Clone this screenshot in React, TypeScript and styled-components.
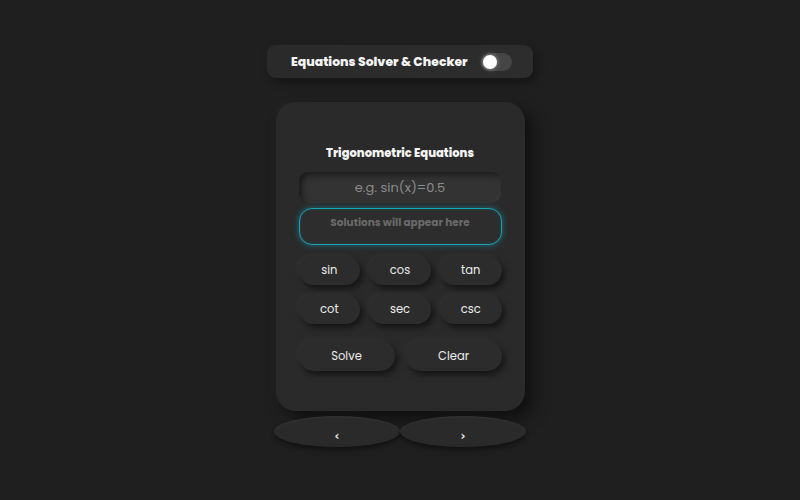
import React from "react";
import styled, { createGlobalStyle } from "styled-components";

const Global = createGlobalStyle`
  html, body { margin: 0; padding: 0; background: #1f1f1f; }
  body { font-family: "Poppins", "Inter", "Open Sans", sans-serif; color: #fff; }
`;

const Page = styled.div`
  width: 800px;
  height: 500px;
  display: flex;
  flex-direction: column;
  align-items: center;
  padding-top: 45px;
  box-sizing: border-box;
`;

const Header = styled.div`
  width: 266px;
  height: 33px;
  box-sizing: border-box;
  border-radius: 9px;
  background: linear-gradient(90deg, #2a2a2a, #2d2d2d);
  box-shadow: 3px 4px 8px rgba(0,0,0,0.35), -2px -2px 6px rgba(255,255,255,0.02);
  display: flex;
  align-items: center;
  padding-left: 24px;
  gap: 13px;
`;

const Title = styled.h1`
  margin: 0;
  font-size: 12.4px;
  font-weight: 800;
  letter-spacing: 0;
  color: #f4f4f4;
`;

const Toggle = styled.div`
  width: 31px;
  height: 18px;
  border-radius: 9px;
  background: #454545;
  display: flex;
  align-items: center;
  padding-left: 2px;
  box-sizing: border-box;
`;

const Knob = styled.div`
  width: 14px;
  height: 14px;
  border-radius: 50%;
  background: #fff;
  box-shadow: 0 0 4px rgba(255,255,255,0.5);
`;

const Card = styled.div`
  margin-top: 24px;
  width: 249px;
  height: 309px;
  box-sizing: border-box;
  border-radius: 20px;
  background: #2a2a2a;
  box-shadow: 8px 8px 16px rgba(0,0,0,0.5), -4px -4px 10px rgba(255,255,255,0.02);
  padding: 44px 23px 0 23px;
  display: flex;
  flex-direction: column;
  align-items: center;
`;

const CardTitle = styled.h2`
  margin: 0;
  font-size: 11.5px;
  font-weight: 800;
  letter-spacing: 0;
  color: #f4f4f4;
  line-height: 14px;
`;

const Input = styled.div`
  margin-top: 12px;
  width: 202px;
  height: 31px;
  box-sizing: border-box;
  border-radius: 9px;
  background: #333333;
  box-shadow: inset 3px 3px 6px rgba(0,0,0,0.5), inset -2px -2px 5px rgba(255,255,255,0.03);
  display: flex;
  align-items: center;
  justify-content: center;
  font-size: 13px;
  color: #8c8c8c;
`;

const Output = styled.div`
  margin-top: 5px;
  width: 203px;
  height: 37px;
  box-sizing: border-box;
  border-radius: 13px;
  border: 1.5px solid #18a2b8;
  box-shadow: 0 0 6px rgba(24,162,184,0.55), inset 0 0 3px rgba(24,162,184,0.25);
  background: #2d2d2d;
  display: flex;
  justify-content: center;
  padding-top: 6px;
  font-size: 10.5px;
  font-weight: 700;
  color: #6a6a6a;
`;

const Grid = styled.div<{ cols: number; gap: number; top: number }>`
  margin-top: ${(p) => p.top}px;
  width: 203px;
  display: grid;
  grid-template-columns: repeat(${(p) => p.cols}, 1fr);
  column-gap: ${(p) => p.gap}px;
  row-gap: 10px;
`;

const Btn = styled.button<{ h: number }>`
  height: ${(p) => p.h}px;
  border: none;
  border-radius: 999px;
  background: #2c2c2c;
  box-shadow: 3px 4px 6px rgba(0,0,0,0.5), -2px -2px 5px rgba(255,255,255,0.04);
  color: #ececec;
  font-family: inherit;
  font-size: 11.5px;
  padding: 0;
`;

const Nav = styled.div`
  margin-top: 5px;
  width: 252px;
  display: flex;
`;

const NavBtn = styled.button`
  flex: 1;
  height: 31px;
  border: none;
  border-radius: 50%;
  background: #2a2a2a;
  box-shadow: 0 3px 5px rgba(0,0,0,0.45), inset 0 1px 2px rgba(255,255,255,0.05);
  color: #e8e8e8;
  font-family: "DejaVu Sans", sans-serif;
  font-size: 12px;
  font-weight: 700;
  padding-top: 9px;
`;

export default function App() {
  const fns = ["sin", "cos", "tan", "cot", "sec", "csc"];
  return (
    <>
      <Global />
      <Page>
        <Header>
          <Title>Equations Solver &amp; Checker</Title>
          <Toggle>
            <Knob />
          </Toggle>
        </Header>
        <Card>
          <CardTitle>Trigonometric Equations</CardTitle>
          <Input>e.g. sin(x)=0.5</Input>
          <Output>Solutions will appear here</Output>
          <Grid cols={3} gap={9} top={11}>
            {fns.map((f) => (
              <Btn key={f} h={29}>{f}</Btn>
            ))}
          </Grid>
          <Grid cols={2} gap={11} top={17}>
            <Btn h={30}>Solve</Btn>
            <Btn h={30}>Clear</Btn>
          </Grid>
        </Card>
        <Nav>
          <NavBtn>‹</NavBtn>
          <NavBtn>›</NavBtn>
        </Nav>
      </Page>
    </>
  );
}
